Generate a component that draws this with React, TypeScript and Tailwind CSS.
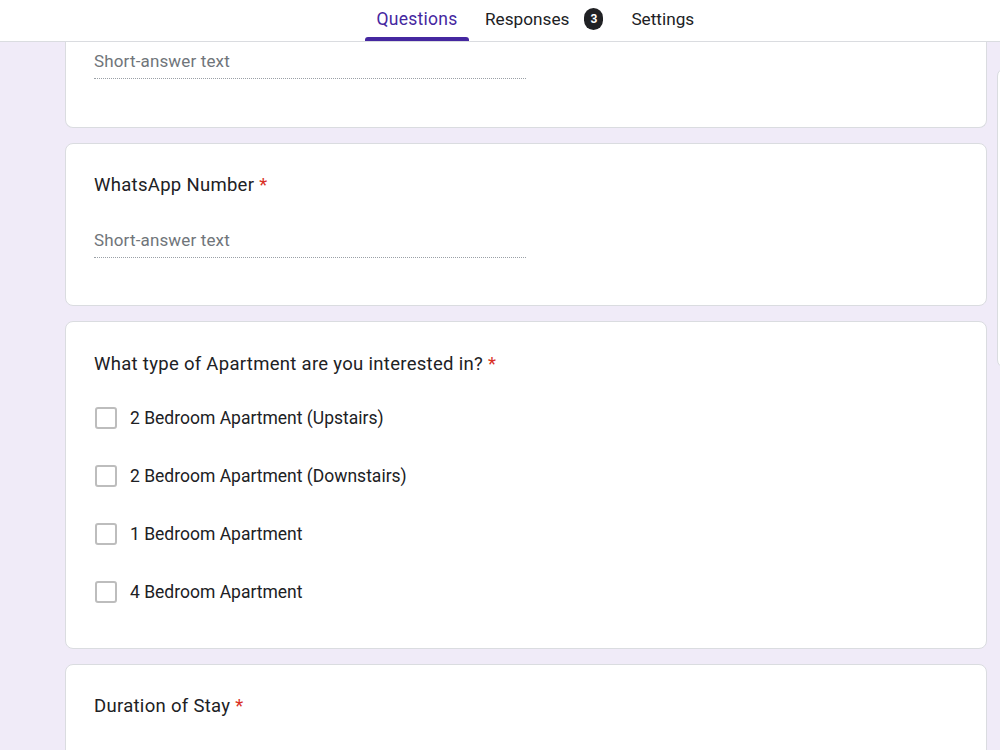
import React from "react";

const font = { fontFamily: "Roboto, 'Noto Sans', Arial, sans-serif" };

function Req() {
  return <span className="text-[#d93025]"> *</span>;
}

function Title({ children }: { children: React.ReactNode }) {
  return <div className="text-[18.5px] leading-[24px] tracking-[0.3px] text-[#202124]">{children}</div>;
}

function ShortAnswer() {
  return (
    <div className="w-[432px] border-b border-dotted border-[#9aa0a6] pb-[5px] text-[17px] leading-[24px] tracking-[0.15px] text-[#70757a]">
      Short-answer text
    </div>
  );
}

function Checkbox({ label }: { label: string }) {
  return (
    <div className="flex h-[24px] items-center">
      <div className="ml-[1px] h-[22px] w-[22px] rounded-[3px] border-2 border-[#bdbdbd]" />
      <span className="ml-[13px] text-[17.5px] leading-[24px] text-[#202124]">{label}</span>
    </div>
  );
}

export default function App() {
  return (
    <div className="relative h-[750px] w-[1000px] overflow-hidden bg-[#f0ebf8]" style={font}>
      <div className="flex h-[42px] items-end border-b border-[#dadce0] bg-white pl-[365px]">
        <div className="flex h-full w-[104px] flex-col items-center justify-between">
          <div className="pt-[7px] text-[17.5px] font-normal leading-[24px] tracking-[0.25px] text-[#4527a0]">Questions</div>
          <div className="h-[4px] w-[104px] rounded-t-[3px] bg-[#4527a0]" />
        </div>
        <div className="ml-[4px] flex h-full items-start px-3 pt-[7px]">
          <span className="text-[17.2px] font-normal leading-[24px] text-[#202124]">Responses</span>
          <span className="ml-[15px] mt-[1px] flex h-[22px] w-[19px] items-center justify-center rounded-full bg-[#202124] text-[12px] font-bold text-white">
            3
          </span>
        </div>
        <div className="ml-[4px] flex h-full items-start px-3 pt-[7px]">
          <span className="text-[17.2px] font-normal leading-[24px] text-[#202124]">Settings</span>
        </div>
      </div>

      <div className="ml-[65px] flex w-[922px] flex-col gap-[15px]">
        <div className="h-[86px] rounded-b-lg border-x border-b border-[#dadce0] bg-white pl-[28px] pt-[7px]">
          <ShortAnswer />
        </div>

        <div className="rounded-lg border border-[#dadce0] bg-white pb-[47px] pl-[28px] pt-[29px]">
          <Title>
            WhatsApp Number<Req />
          </Title>
          <div className="mt-[31px]">
            <ShortAnswer />
          </div>
        </div>

        <div className="rounded-lg border border-[#dadce0] bg-white pb-[44px] pl-[28px] pt-[30px]">
          <Title>
            What type of Apartment are you interested in?<Req />
          </Title>
          <div className="mt-[30px] flex flex-col gap-[34px]">
            <Checkbox label="2 Bedroom Apartment (Upstairs)" />
            <Checkbox label="2 Bedroom Apartment (Downstairs)" />
            <Checkbox label="1 Bedroom Apartment" />
            <Checkbox label="4 Bedroom Apartment" />
          </div>
        </div>

        <div className="h-[120px] rounded-t-lg border border-[#dadce0] bg-white pl-[28px] pt-[29px]">
          <Title>
            Duration of Stay<Req />
          </Title>
        </div>
      </div>

      <div className="absolute left-[997px] top-[68px] h-[300px] w-[60px] rounded-lg border border-[#dadce0] bg-white" />
    </div>
  );
}
